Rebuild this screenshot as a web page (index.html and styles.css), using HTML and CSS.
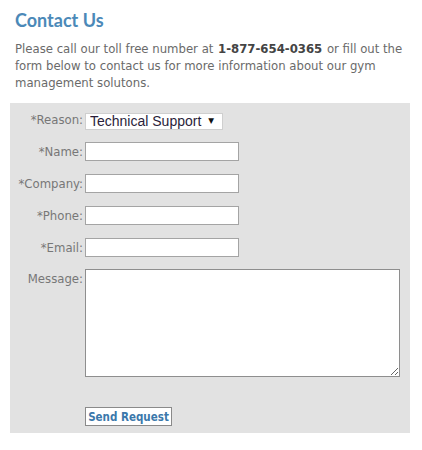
FILE: index.html
```html
<!DOCTYPE html>
<html>
<head>
  <title>Contact Us</title>
  <link rel="stylesheet" href="styles.css">
</head>
<body>
  <div class="page">
    <h1 class="title">Contact Us</h1>
    <p class="intro">Please call our toll free number at <strong>1-877-654-0365</strong> or fill out the form below to contact us for more information about our gym management solutons.</p>

    <!-- Contact form -->
    <form class="contact-form">
      <div class="row">
        <label for="reason">*Reason:</label>
        <div class="select-wrap">
          <select id="reason">
            <option>Technical Support</option>
            <option>Sales</option>
            <option>Billing</option>
          </select>
          <span class="select-arrow">&#9660;</span>
        </div>
      </div>
      <div class="row">
        <label for="name">*Name:</label>
        <input type="text" id="name">
      </div>
      <div class="row">
        <label for="company">*Company:</label>
        <input type="text" id="company">
      </div>
      <div class="row">
        <label for="phone">*Phone:</label>
        <input type="text" id="phone">
      </div>
      <div class="row">
        <label for="email">*Email:</label>
        <input type="text" id="email">
      </div>
      <div class="row message-row">
        <label for="message">Message:</label>
        <textarea id="message"></textarea>
      </div>
      <div class="row submit-row">
        <span></span>
        <button type="button" class="send-btn">Send Request</button>
      </div>
    </form>
  </div>
</body>
</html>
```

FILE: styles.css
```css
body {
  margin: 0;
  padding: 0 10px;
  font-family: "DejaVu Sans Condensed", "DejaVu Sans", Verdana, sans-serif;
  color: #666;
  background: #fff;
}
.page {
  width: 400px;
}
.title {
  margin: 8px 0 0 0;
  padding-left: 5px;
  font-family: Lato, "Open Sans", sans-serif;
  font-size: 18px;
  font-weight: bold;
  line-height: 24px;
  color: #4b89b8;
}
.intro {
  margin: 8px 0 12px 0;
  padding-left: 5px;
  font-size: 13px;
  line-height: 17px;
  color: #6a6a6a;
}
.intro strong {
  display: inline-block;
  margin: 0 1px;
  color: #444;
}

/* Form panel */
.contact-form {
  background: #e2e2e2;
  padding: 0 10px 7px 0;
}
.row {
  display: grid;
  grid-template-columns: 73px 1fr;
  column-gap: 2px;
  align-items: center;
  height: 32px;
}
.row label {
  text-align: right;
  font-size: 13px;
  color: #777;
  white-space: nowrap;
}
.row input {
  box-sizing: border-box;
  width: 154px;
  height: 19px;
  margin: 0;
  padding: 1px 3px;
  border: 1px solid #a4a4a4;
  background: #fff;
}
.select-wrap {
  position: relative;
  width: 138px;
  height: 17px;
}
.select-wrap select {
  appearance: none;
  -webkit-appearance: none;
  box-sizing: border-box;
  width: 138px;
  height: 17px;
  margin: 0;
  padding: 0 0 0 4px;
  border: 1px solid #cfcfcf;
  border-radius: 0;
  background: #fff;
  font-family: "Liberation Sans", Arial, sans-serif;
  font-size: 14px;
  line-height: 15px;
  color: #2a1e3a;
}
.select-arrow {
  position: absolute;
  top: 6px;
  right: 9px;
  font-family: "DejaVu Sans", sans-serif;
  font-size: 7.5px;
  line-height: 7px;
  color: #111;
  pointer-events: none;
}
.message-row {
  height: auto;
  align-items: start;
  margin-top: 6px;
}
.message-row label {
  padding-top: 2px;
}
.row textarea {
  box-sizing: border-box;
  width: 315px;
  height: 108px;
  margin: 0;
  border: 1px solid #8e8e8e;
  background: #fff;
  resize: both;
}
.submit-row {
  height: auto;
  margin-top: 30px;
}
.send-btn {
  box-sizing: border-box;
  width: 87px;
  height: 19px;
  padding: 0;
  border: 1px solid #8a8a8a;
  background: #fff;
  font-family: "DejaVu Sans Condensed", "DejaVu Sans", sans-serif;
  font-size: 11.5px;
  font-weight: bold;
  white-space: nowrap;
  color: #3b78ab;
  cursor: pointer;
}
```
